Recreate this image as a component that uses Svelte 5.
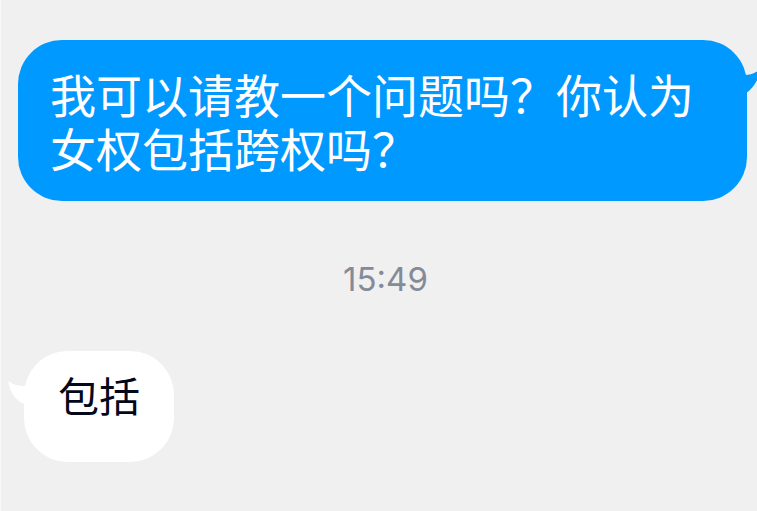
<script lang="ts">
  type Message = {
    side: 'sent' | 'received';
    text: string;
  };

  const sent: Message = { side: 'sent', text: '我可以请教一个问题吗？你认为女权包括跨权吗？' };
  const received: Message = { side: 'received', text: '包括' };
  const time = '15:49';
</script>

{#snippet bubble(message: Message)}
  <article class="bubble {message.side}">
    <p>{message.text}</p>
    {#if message.side === 'sent'}
      <svg class="tail" viewBox="0 0 18 28" width="18" height="28" aria-hidden="true">
        <path d="M0 5 C4 5 8 4 11 2 L15 0 C14 9 9 18 0 24 Z" fill="currentColor" />
      </svg>
    {:else}
      <svg class="tail" viewBox="0 0 18 28" width="18" height="28" aria-hidden="true">
        <path d="M18 5 C11 5.5 5 3.5 1.6 0.8 C0.8 0 0.2 0.6 0.4 1.6 C2 12 8 20 18 24 Z" fill="currentColor" />
      </svg>
    {/if}
  </article>
{/snippet}

<main class="chat">
  {@render bubble(sent)}
  <time datetime={time}>{time}</time>
  {@render bubble(received)}
</main>

<style>
  :global(body) {
    margin: 0;
    background: #f0f0f0;
  }

  .chat {
    display: flex;
    flex-direction: column;
    box-sizing: border-box;
    min-height: 100vh;
    padding: 40px 10px 40px 17px;
    border-left: 1px solid #f8f8f8;
    overflow: hidden;
  }

  .bubble {
    position: relative;
    border-radius: 44px;
  }

  .bubble p {
    margin: 0;
  }

  .sent {
    padding: 26px 32px 27px;
    background: #0099ff;
    color: #0099ff;
    font-family: 'Noto Sans CJK SC', sans-serif;
    font-size: 46px;
    line-height: 54px;
  }

  .sent p {
    color: #ffffff;
  }

  .received {
    align-self: flex-start;
    margin-left: 6px;
    padding: 16px 34px 41px;
    background: #ffffff;
    color: #ffffff;
    font-family: KaiTi, 'Kaiti SC', STKaiti, 'Noto Sans CJK SC', sans-serif;
    font-size: 41px;
    line-height: 54px;
  }

  .received p {
    color: #03081a;
  }

  .tail {
    position: absolute;
    top: 30px;
  }

  .sent .tail {
    left: calc(100% - 2px);
  }

  .received .tail {
    right: calc(100% - 2px);
  }

  time {
    align-self: center;
    margin: 58px 0 52px 6px;
    color: #858a99;
    font-family: Inter, sans-serif;
    font-size: 33px;
    line-height: 40px;
  }
</style>
